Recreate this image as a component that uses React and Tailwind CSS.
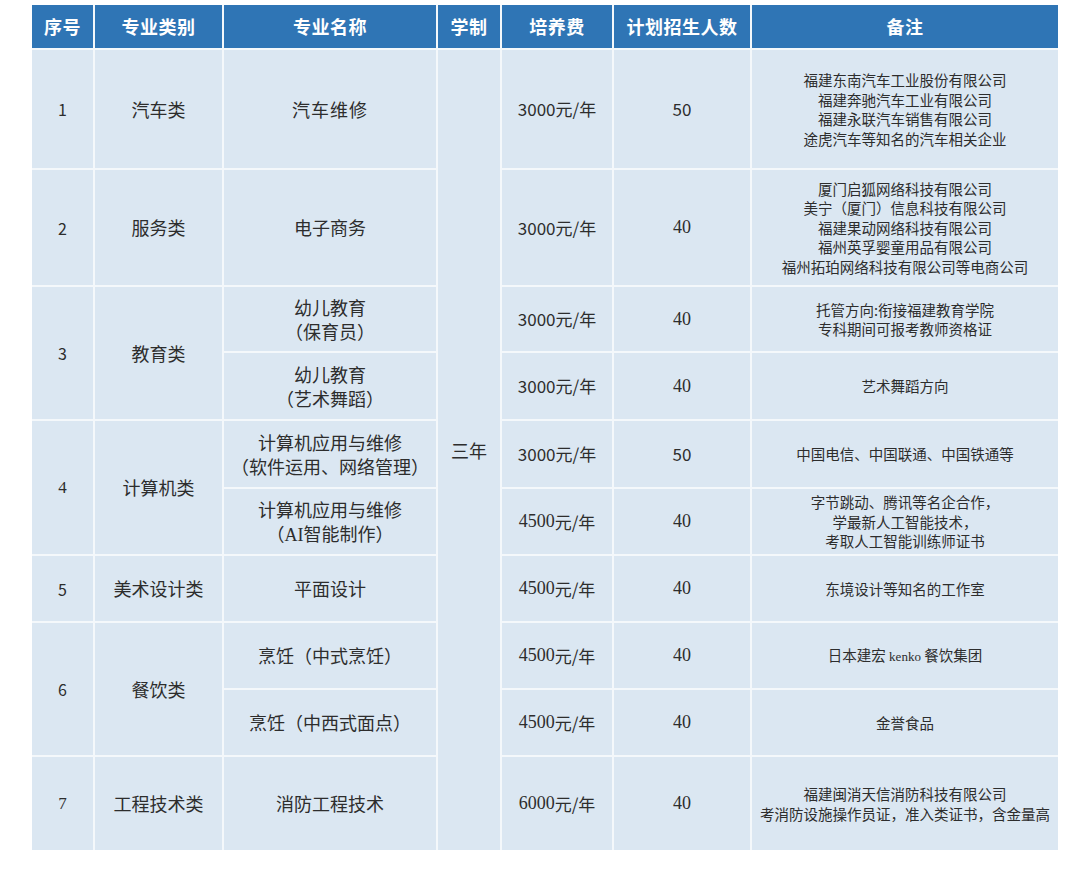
import React from "react";

const sans = "font-['Noto_Sans_CJK_SC',sans-serif]";
const serif = "font-['Liberation_Serif','Noto_Sans_CJK_SC',serif]";

const headers = ["序号", "专业类别", "专业名称", "学制", "培养费", "计划招生人数", "备注"];

function Cell({ span, className = "", children }) {
  const spans = { 2: "row-span-2", 10: "row-span-10" };
  return (
    <div className={`flex items-center justify-center bg-[#dbe7f2] text-center text-[#2d2d2d] ${spans[span] || ""} ${className}`}>
      {children}
    </div>
  );
}

function Fee({ amount, digits = "sans" }) {
  return (
    <Cell className="text-[17px]">
      <span className={digits === "serif" ? `${serif} text-[18px]` : ""}>{amount}</span>
      <span>元/年</span>
    </Cell>
  );
}

function Count({ value }) {
  return value === "40" ? (
    <Cell className={`${serif} text-[18px]`}>{value}</Cell>
  ) : (
    <Cell className="text-[17px]">{value}</Cell>
  );
}

function Note({ lines }) {
  return (
    <Cell className="text-[14.5px] leading-[19.5px]">
      <div className="whitespace-nowrap">
        {lines.map((line, i) => (
          <div key={i}>{line}</div>
        ))}
      </div>
    </Cell>
  );
}

export default function App() {
  return (
    <div className={`h-[872px] w-[1080px] bg-white pl-[32px] pt-[5px] ${sans}`}>
      <div className="grid w-[1026px] grid-cols-[61px_127px_212px_62px_110px_136px_306px] grid-rows-[43px_118px_115px_64px_66px_66px_65px_65px_65px_65px_93px] gap-[2px] bg-[#f4f8fb]">
        {headers.map((h) => (
          <div key={h} className="flex items-center justify-center bg-[#2f75b5] text-[18px] font-bold tracking-[0.5px] text-white">
            {h}
          </div>
        ))}

        {/* 1 */}
        <Cell className="text-[16px]">1</Cell>
        <Cell className="text-[18px]">汽车类</Cell>
        <Cell className="text-[18px] tracking-[1px]">汽车维修</Cell>
        <Cell span={10} className="text-[18px]">三年</Cell>
        <Fee amount="3000" />
        <Count value="50" />
        <Note lines={["福建东南汽车工业股份有限公司", "福建奔驰汽车工业有限公司", "福建永联汽车销售有限公司", "途虎汽车等知名的汽车相关企业"]} />

        {/* 2 */}
        <Cell className="text-[16px]">2</Cell>
        <Cell className="text-[18px]">服务类</Cell>
        <Cell className="text-[18px]">电子商务</Cell>
        <Fee amount="3000" />
        <Count value="40" />
        <Note lines={["厦门启狐网络科技有限公司", "美宁（厦门）信息科技有限公司", "福建果动网络科技有限公司", "福州英孚婴童用品有限公司", "福州拓珀网络科技有限公司等电商公司"]} />

        {/* 3 */}
        <Cell span={2} className="text-[16px]">3</Cell>
        <Cell span={2} className="text-[18px]">教育类</Cell>
        <Cell className="text-[18px] leading-[24px]">
          <div>幼儿教育<br />（保育员）</div>
        </Cell>
        <Fee amount="3000" />
        <Count value="40" />
        <Note lines={["托管方向:衔接福建教育学院", "专科期间可报考教师资格证"]} />
        <Cell className="text-[18px] leading-[24px]">
          <div>幼儿教育<br />（艺术舞蹈）</div>
        </Cell>
        <Fee amount="3000" />
        <Count value="40" />
        <Note lines={["艺术舞蹈方向"]} />

        {/* 4 */}
        <Cell span={2} className={`${serif} text-[17px]`}>4</Cell>
        <Cell span={2} className="text-[18px]">计算机类</Cell>
        <Cell className="text-[18px] leading-[24px]">
          <div>计算机应用与维修<br />（软件运用、网络管理）</div>
        </Cell>
        <Fee amount="3000" />
        <Count value="50" />
        <Note lines={["中国电信、中国联通、中国铁通等"]} />
        <Cell className="text-[18px] leading-[24px]">
          <div>计算机应用与维修<br />（<span className={`${serif} text-[18px]`}>AI</span>智能制作）</div>
        </Cell>
        <Fee amount="4500" digits="serif" />
        <Count value="40" />
        <Note lines={["字节跳动、腾讯等名企合作，", "学最新人工智能技术，", "考取人工智能训练师证书"]} />

        {/* 5 */}
        <Cell className="text-[16px]">5</Cell>
        <Cell className="text-[18px]">美术设计类</Cell>
        <Cell className="text-[18px]">平面设计</Cell>
        <Fee amount="4500" digits="serif" />
        <Count value="40" />
        <Note lines={["东境设计等知名的工作室"]} />

        {/* 6 */}
        <Cell span={2} className="text-[16px]">6</Cell>
        <Cell span={2} className="text-[18px]">餐饮类</Cell>
        <Cell className="text-[18px]">烹饪（中式烹饪）</Cell>
        <Fee amount="4500" digits="serif" />
        <Count value="40" />
        <Cell className="text-[14.5px]">
          <span>日本建宏 <span className={`${serif} text-[13px]`}>kenko</span> 餐饮集团</span>
        </Cell>
        <Cell className="text-[18px]">烹饪（中西式面点）</Cell>
        <Fee amount="4500" digits="serif" />
        <Count value="40" />
        <Note lines={["金誉食品"]} />

        {/* 7 */}
        <Cell className={`${serif} text-[17px]`}>7</Cell>
        <Cell className="text-[18px]">工程技术类</Cell>
        <Cell className="text-[18px]">消防工程技术</Cell>
        <Fee amount="6000" digits="serif" />
        <Count value="40" />
        <Note lines={["福建闽消天信消防科技有限公司", "考消防设施操作员证，准入类证书，含金量高"]} />
      </div>
    </div>
  );
}
